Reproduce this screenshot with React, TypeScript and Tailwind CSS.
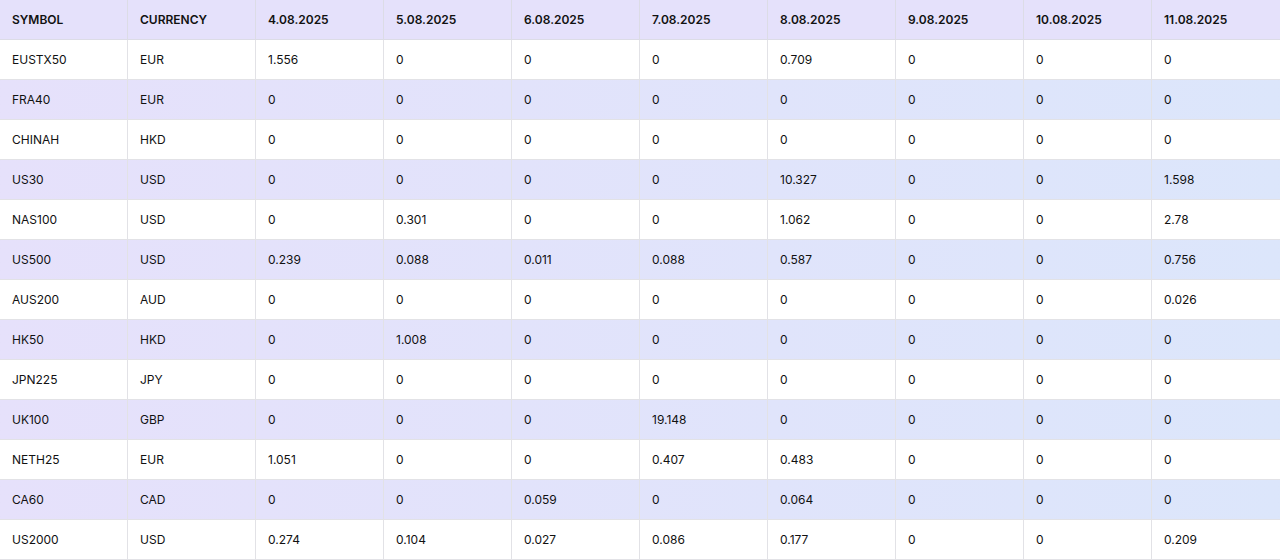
const dates = ['4.08.2025', '5.08.2025', '6.08.2025', '7.08.2025', '8.08.2025', '9.08.2025', '10.08.2025', '11.08.2025']

const rows: [string, string, string[]][] = [
  ['EUSTX50', 'EUR', ['1.556', '0', '0', '0', '0.709', '0', '0', '0']],
  ['FRA40', 'EUR', ['0', '0', '0', '0', '0', '0', '0', '0']],
  ['CHINAH', 'HKD', ['0', '0', '0', '0', '0', '0', '0', '0']],
  ['US30', 'USD', ['0', '0', '0', '0', '10.327', '0', '0', '1.598']],
  ['NAS100', 'USD', ['0', '0.301', '0', '0', '1.062', '0', '0', '2.78']],
  ['US500', 'USD', ['0.239', '0.088', '0.011', '0.088', '0.587', '0', '0', '0.756']],
  ['AUS200', 'AUD', ['0', '0', '0', '0', '0', '0', '0', '0.026']],
  ['HK50', 'HKD', ['0', '1.008', '0', '0', '0', '0', '0', '0']],
  ['JPN225', 'JPY', ['0', '0', '0', '0', '0', '0', '0', '0']],
  ['UK100', 'GBP', ['0', '0', '0', '19.148', '0', '0', '0', '0']],
  ['NETH25', 'EUR', ['1.051', '0', '0', '0.407', '0.483', '0', '0', '0']],
  ['CA60', 'CAD', ['0', '0', '0.059', '0', '0.064', '0', '0', '0']],
  ['US2000', 'USD', ['0.274', '0.104', '0.027', '0.086', '0.177', '0', '0', '0.209']],
]

export default function App() {
  const cols = ['SYMBOL', 'CURRENCY', ...dates]
  return (
    <div className="w-[1280px] h-[560px] overflow-hidden bg-white text-[12px] text-[#111] font-[family-name:Inter,sans-serif]">
      <div className="grid grid-cols-[repeat(10,128px)] h-10 bg-[#e5e1fb] font-semibold">
        {cols.map((c, i) => (
          <div key={i} className="flex items-center px-3 border-r border-b border-[#dcdce6] last:border-r-0">
            {c}
          </div>
        ))}
      </div>
      {rows.map(([sym, cur, vals], r) => (
        <div
          key={sym}
          className={
            'grid grid-cols-[repeat(10,128px)] h-10 ' +
            (r % 2 === 1 ? 'bg-gradient-to-r from-[#e6e1fb] to-[#dce6fb]' : 'bg-white')
          }
        >
          {[sym, cur, ...vals].map((v, i) => (
            <div key={i} className="flex items-center px-3 border-r border-b border-[#e2e2e6] last:border-r-0">
              {v}
            </div>
          ))}
        </div>
      ))}
    </div>
  )
}
